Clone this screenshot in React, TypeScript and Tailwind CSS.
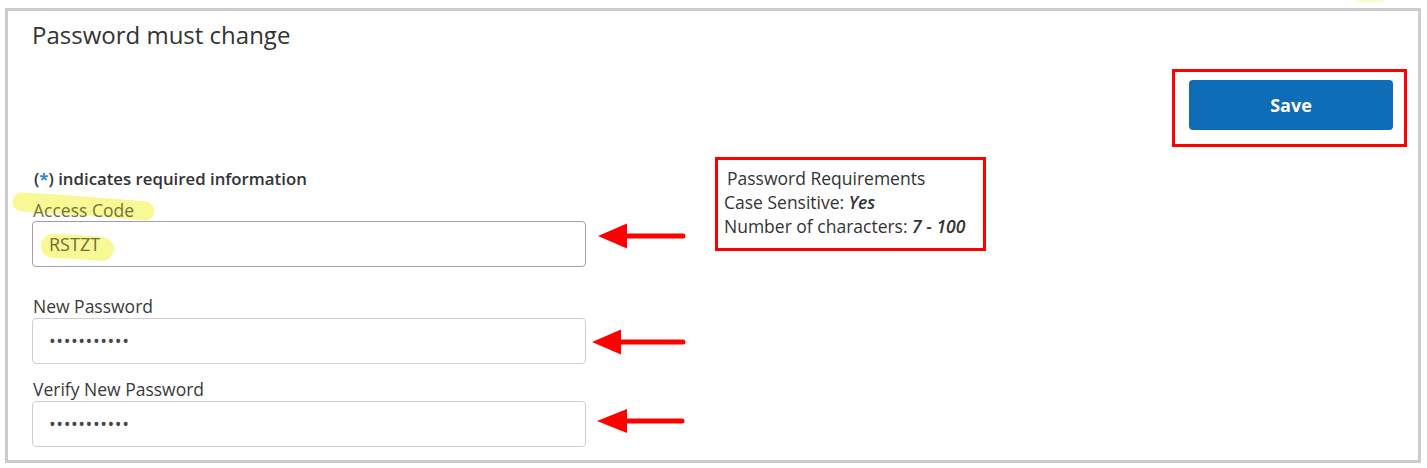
import React from "react";

function Arrow({ tipX, tipY, baseX, half, endX }: { tipX: number; tipY: number; baseX: number; half: number; endX: number }) {
  return (
    <g>
      <line x1={baseX - 2} y1={tipY} x2={endX} y2={tipY} stroke="#ff0000" strokeWidth={5} strokeLinecap="round" />
      <polygon points={`${tipX},${tipY} ${baseX},${tipY - half} ${baseX},${tipY + half}`} fill="#ff0000" />
    </g>
  );
}

export default function App() {
  return (
    <div className="relative w-[1427px] h-[468px] bg-white pl-[5px] pt-[8px] font-['Open_Sans',sans-serif] overflow-hidden">
      {/* highlighter strokes (behind text) */}
      <svg className="absolute left-0 top-0 pointer-events-none" width={1427} height={468}>
        <path d="M22 202 Q 80 205 145 211" stroke="#f8f894" strokeWidth={19} strokeLinecap="round" fill="none" />
        <path d="M53 246 Q 80 247 102 249" stroke="#f8f894" strokeWidth={24} strokeLinecap="round" fill="none" />
        <rect x={1357} y={0} width={26} height={2} fill="#fbfbc4" />
      </svg>

      <div className="relative w-[1416px] h-[455px] border-[3px] border-[#cccccc]">
        <h1 className="ml-[24px] mt-[8px] text-[24px] leading-[32px] text-[#333333] font-normal">
          Password must change
        </h1>

        <div className="mt-[18px] flex justify-end pr-[11px]">
          <div className="border-[3px] border-[#ff0000] pl-[14px] pr-[11px] pt-[8px] pb-[14px]">
            <button className="w-[204px] h-[50px] rounded-[4px] bg-[#0f6cb6] text-white text-[18px] font-bold leading-[24px]">
              Save
            </button>
          </div>
        </div>

        <div className="mt-[10px] flex items-start">
          <div className="ml-[24px] w-[554px] pt-[10px]">
            <div className="ml-[2px] text-[16.8px] leading-[24px] font-semibold text-[#333333]">
              (<span className="text-[#2b8ad6] font-bold">*</span>) indicates required information
            </div>

            <div className="mt-[8px] ml-[1px] text-[17.5px] leading-[22px] text-[#72723c]">Access Code</div>
            <div className="h-[46px] rounded-[4px] border border-[#a898b2] bg-transparent flex items-center pl-[16px] text-[18px] leading-[24px] text-[#6e6e3a]">
              RSTZT
            </div>

            <div className="mt-[28px] ml-[1px] text-[17.5px] leading-[22px] text-[#3a3a3a]">New Password</div>
            <div className="mt-[1px] h-[46px] rounded-[4px] border border-[#cfcfcf] flex items-center pl-[16px] text-[18px] leading-[24px] tracking-[0.55px] text-[#474747]">
              •••••••••••
            </div>

            <div className="mt-[14px] ml-[1px] text-[17.5px] leading-[22px] text-[#3a3a3a]">Verify New Password</div>
            <div className="mt-[1px] h-[46px] rounded-[4px] border border-[#cfcfcf] flex items-center pl-[16px] text-[18px] leading-[24px] tracking-[0.55px] text-[#474747]">
              •••••••••••
            </div>
          </div>

          <div className="ml-[129px] w-[271px] h-[94px] border-[3px] border-[#ff0000] pl-[6px] pt-[6px] text-[17.5px] leading-[24px] text-[#333333]">
            <div className="pl-[3px]">Password Requirements</div>
            <div>
              Case Sensitive: <span className="italic font-semibold">Yes</span>
            </div>
            <div>
              Number of characters: <span className="italic font-semibold">7 - 100</span>
            </div>
          </div>
        </div>
      </div>

      {/* annotation arrows */}
      <svg className="absolute left-0 top-0 pointer-events-none" width={1427} height={468}>
        <Arrow tipX={598} tipY={236} baseX={627} half={12.5} endX={683} />
        <Arrow tipX={592} tipY={342} baseX={621} half={12.5} endX={683} />
        <Arrow tipX={597} tipY={421} baseX={627} half={12} endX={682} />
      </svg>
    </div>
  );
}
